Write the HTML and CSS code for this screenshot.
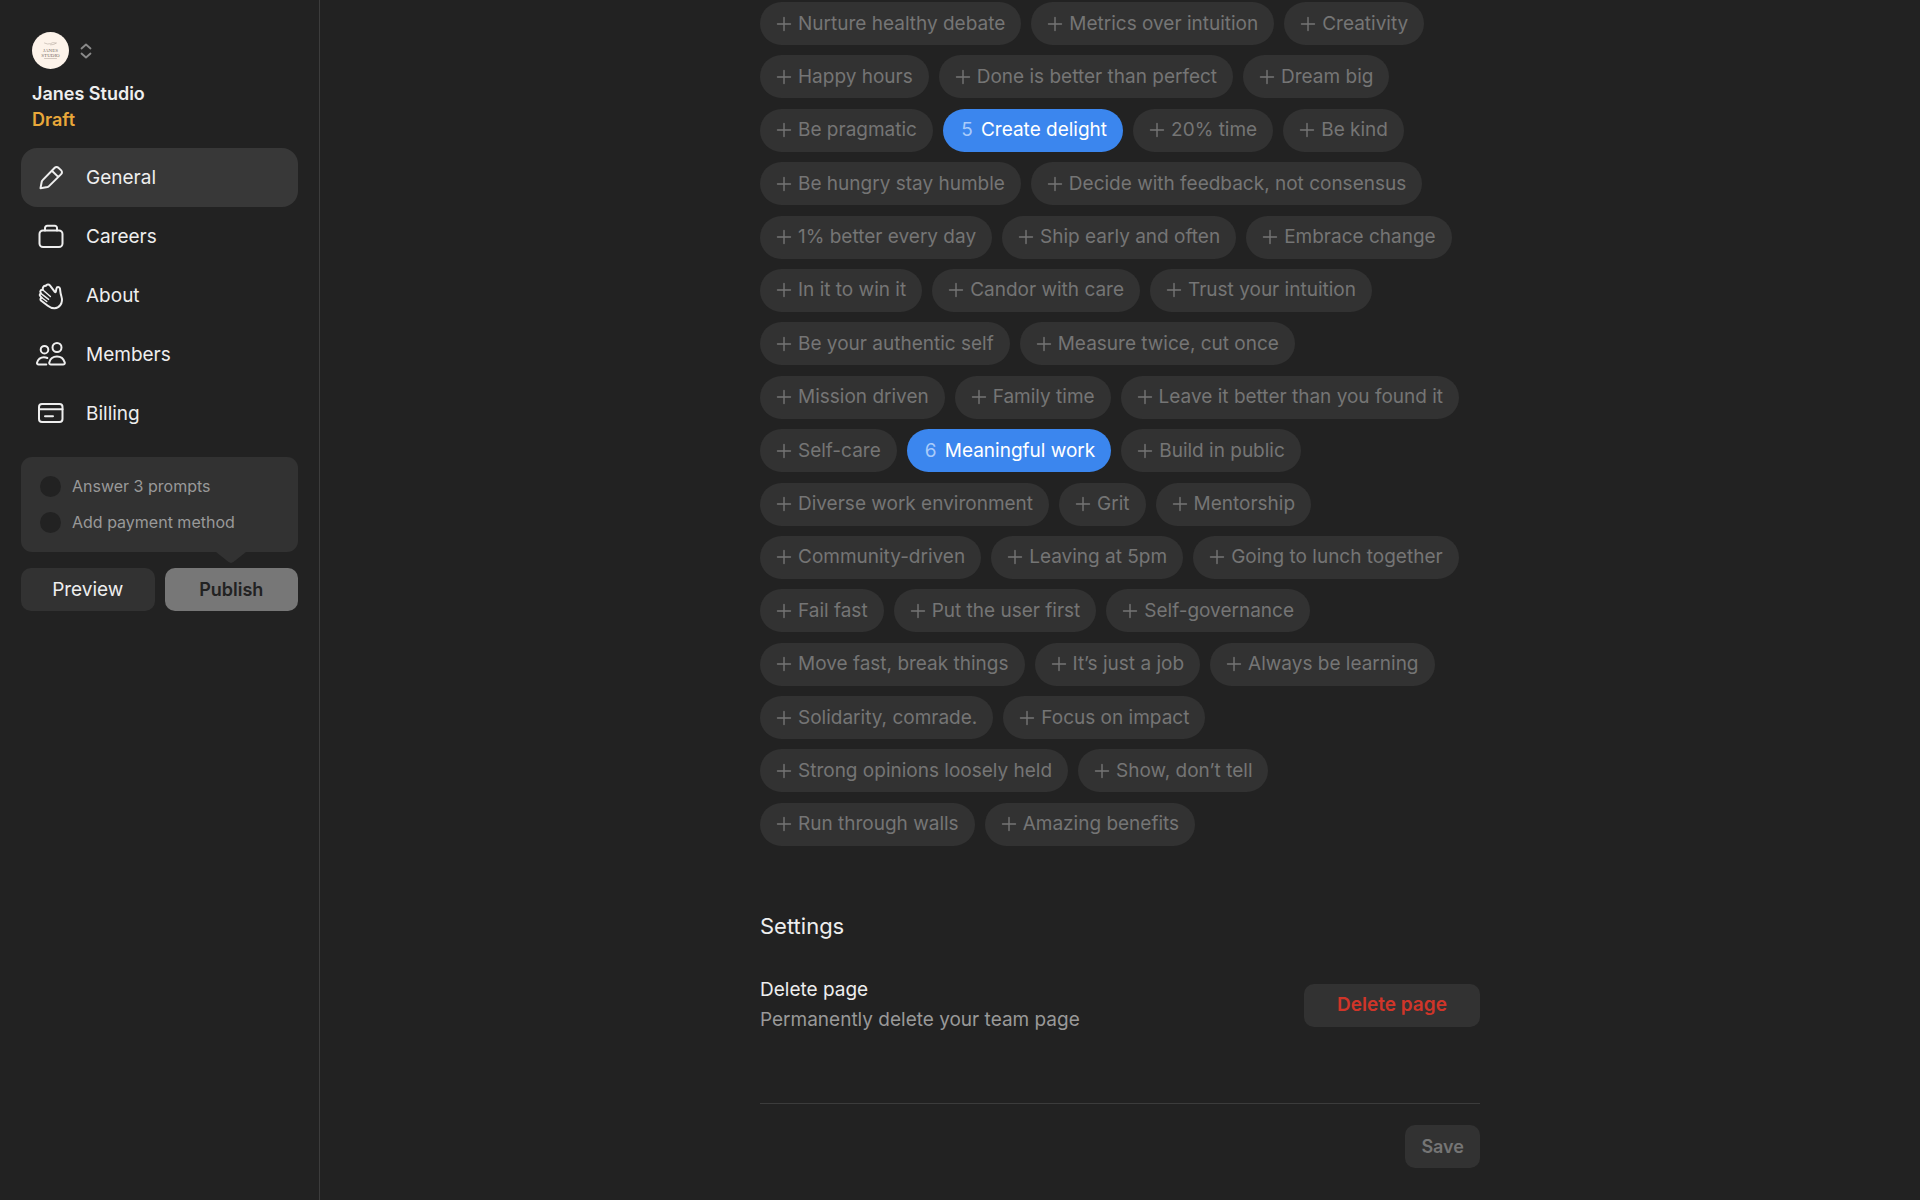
FILE: index.html
```html
<!DOCTYPE html>
<html lang="en">
<head>
<meta charset="utf-8">
<meta name="viewport" content="width=device-width, initial-scale=1">
<title>Janes Studio – General</title>
<link rel="stylesheet" href="styles.css">
</head>
<body>
<svg class="sprite" aria-hidden="true">
  <symbol id="plus" viewBox="0 0 16 16"><path d="M8 1.500v13M1.500 8h13"/></symbol>
</svg>
<div class="app">
  <aside class="sidebar">
    <header class="account">
      <button class="switcher" type="button" aria-label="Switch page">
        <svg class="avatar" viewBox="0 0 37 37" aria-hidden="true">
          <circle class="avatar-bg" cx="18.500" cy="18.500" r="18.500"/>
          <path class="avatar-line" d="M12.500 11l3 1 3-.3 2-1 4 .3-3 1.500-3 .3M12.500 26.500h12"/>
          <text class="avatar-text" x="18.500" y="20">JANES</text>
          <text class="avatar-text" x="18.500" y="24.500">STUDIO</text>
        </svg>
        <svg class="chevrons" viewBox="0 0 12 16" aria-hidden="true"><path d="M1.500 5.500L6 1.500l4.500 4M1.500 10.500l4.500 4 4.500-4"/></svg>
      </button>
      <div class="name">Janes Studio</div>
      <div class="status">Draft</div>
    </header>
    <nav class="nav">
      <a class="nav-item active" href="#general" aria-current="page">
        <svg class="icon" viewBox="0 0 30 30" aria-hidden="true"><path d="M4.500 25.200l1.300-6.800a2 2 0 0 1 .6-1L18.700 4.700a2.600 2.600 0 0 1 3.700 0l2.800 2.700a2.600 2.600 0 0 1 0 3.700L12.500 23.600a2 2 0 0 1-1 .5zM15.900 7.700l6.300 6.200"/></svg>
        General
      </a>
      <a class="nav-item" href="#careers">
        <svg class="icon" viewBox="0 0 30 30" aria-hidden="true"><rect x="3.500" y="8.500" width="23" height="16.500" rx="3.500"/><path d="M9 8.500V6A2.200 2.200 0 0 1 11.200 3.800h7.600a2.200 2.200 0 0 1 2.200 2.200V8.500"/></svg>
        Careers
      </a>
      <a class="nav-item" href="#about">
        <svg class="icon" viewBox="0 0 30 30" aria-hidden="true"><path d="M11.800 24.700L4.900 19.500a1.600 1.600 0 0 1 .9-2.700L4.300 15.100a1.600 1.600 0 0 1 .5-2.700L4.600 11.600c-1-1.700.6-3.500 2.300-2.700C6.200 6.400 7.800 4.600 9.800 4.900c1.100-1.600 3.100-1.700 4.100-.6l4.900 6.600c.4.500.9.400 1-.2l.6-3.100c.4-2.100 3.200-2 3.600.1.300 2.200.3 4.300 1.300 7.300 1.200 3.800 1.300 6-1 9.100-2.900 3.900-8 4.200-12.500.6z"/><path class="fine" d="M5.800 16.800l5 3.700M4.800 12.400l7.800 6M6.900 8.900l7.500 6.700"/></svg>
        About
      </a>
      <a class="nav-item" href="#members">
        <svg class="icon" viewBox="0 0 30 30" aria-hidden="true"><circle cx="21" cy="7.500" r="4.500"/><circle cx="8.500" cy="9.700" r="3.800"/><path d="M15 24.500h12c1.400 0 2.100-.9 1.700-2.100-1.100-3.500-3.700-5.800-7.700-5.800s-6.800 2.300-7.700 5.800c-.3 1.200.4 2.100 1.700 2.100zM10.300 24.500H2.600C1.400 24.500.8 23.700 1.100 22.600c.9-3.200 3.200-5.300 6.800-5.300 1.300 0 2.400.2 3.400.7"/></svg>
        Members
      </a>
      <a class="nav-item" href="#billing">
        <svg class="icon" viewBox="0 0 30 30" aria-hidden="true"><rect x="3" y="5" width="23.500" height="18" rx="3"/><path d="M3 10.300H26.500M9 17.300h8"/></svg>
        Billing
      </a>
    </nav>
    <ul class="todo">
      <li><span class="dot"></span>Answer 3 prompts</li>
      <li><span class="dot"></span>Add payment method</li>
    </ul>
    <div class="actions">
      <button class="btn" type="button">Preview</button>
      <button class="btn publish" type="button">Publish</button>
    </div>
  </aside>
  <main class="content">
    <div class="column">
      <div class="chips">
        <button class="chip" type="button"><svg class="mark"><use href="#plus"/></svg>Nurture healthy debate</button>
        <button class="chip" type="button"><svg class="mark"><use href="#plus"/></svg>Metrics over intuition</button>
        <button class="chip" type="button"><svg class="mark"><use href="#plus"/></svg>Creativity</button>
        <button class="chip" type="button"><svg class="mark"><use href="#plus"/></svg>Happy hours</button>
        <button class="chip" type="button"><svg class="mark"><use href="#plus"/></svg>Done is better than perfect</button>
        <button class="chip" type="button"><svg class="mark"><use href="#plus"/></svg>Dream big</button>
        <button class="chip" type="button"><svg class="mark"><use href="#plus"/></svg>Be pragmatic</button>
        <button class="chip selected" type="button" aria-pressed="true"><span class="mark">5</span>Create delight</button>
        <button class="chip" type="button"><svg class="mark"><use href="#plus"/></svg>20% time</button>
        <button class="chip" type="button"><svg class="mark"><use href="#plus"/></svg>Be kind</button>
        <button class="chip" type="button"><svg class="mark"><use href="#plus"/></svg>Be hungry stay humble</button>
        <button class="chip" type="button"><svg class="mark"><use href="#plus"/></svg>Decide with feedback, not consensus</button>
        <button class="chip" type="button"><svg class="mark"><use href="#plus"/></svg>1% better every day</button>
        <button class="chip" type="button"><svg class="mark"><use href="#plus"/></svg>Ship early and often</button>
        <button class="chip" type="button"><svg class="mark"><use href="#plus"/></svg>Embrace change</button>
        <button class="chip" type="button"><svg class="mark"><use href="#plus"/></svg>In it to win it</button>
        <button class="chip" type="button"><svg class="mark"><use href="#plus"/></svg>Candor with care</button>
        <button class="chip" type="button"><svg class="mark"><use href="#plus"/></svg>Trust your intuition</button>
        <button class="chip" type="button"><svg class="mark"><use href="#plus"/></svg>Be your authentic self</button>
        <button class="chip" type="button"><svg class="mark"><use href="#plus"/></svg>Measure twice, cut once</button>
        <button class="chip" type="button"><svg class="mark"><use href="#plus"/></svg>Mission driven</button>
        <button class="chip" type="button"><svg class="mark"><use href="#plus"/></svg>Family time</button>
        <button class="chip" type="button"><svg class="mark"><use href="#plus"/></svg>Leave it better than you found it</button>
        <button class="chip" type="button"><svg class="mark"><use href="#plus"/></svg>Self-care</button>
        <button class="chip selected" type="button" aria-pressed="true"><span class="mark">6</span>Meaningful work</button>
        <button class="chip" type="button"><svg class="mark"><use href="#plus"/></svg>Build in public</button>
        <button class="chip" type="button"><svg class="mark"><use href="#plus"/></svg>Diverse work environment</button>
        <button class="chip" type="button"><svg class="mark"><use href="#plus"/></svg>Grit</button>
        <button class="chip" type="button"><svg class="mark"><use href="#plus"/></svg>Mentorship</button>
        <button class="chip" type="button"><svg class="mark"><use href="#plus"/></svg>Community-driven</button>
        <button class="chip" type="button"><svg class="mark"><use href="#plus"/></svg>Leaving at 5pm</button>
        <button class="chip" type="button"><svg class="mark"><use href="#plus"/></svg>Going to lunch together</button>
        <button class="chip" type="button"><svg class="mark"><use href="#plus"/></svg>Fail fast</button>
        <button class="chip" type="button"><svg class="mark"><use href="#plus"/></svg>Put the user first</button>
        <button class="chip" type="button"><svg class="mark"><use href="#plus"/></svg>Self-governance</button>
        <button class="chip" type="button"><svg class="mark"><use href="#plus"/></svg>Move fast, break things</button>
        <button class="chip" type="button"><svg class="mark"><use href="#plus"/></svg>It’s just a job</button>
        <button class="chip" type="button"><svg class="mark"><use href="#plus"/></svg>Always be learning</button>
        <button class="chip" type="button"><svg class="mark"><use href="#plus"/></svg>Solidarity, comrade.</button>
        <button class="chip" type="button"><svg class="mark"><use href="#plus"/></svg>Focus on impact</button>
        <button class="chip" type="button"><svg class="mark"><use href="#plus"/></svg>Strong opinions loosely held</button>
        <button class="chip" type="button"><svg class="mark"><use href="#plus"/></svg>Show, don’t tell</button>
        <button class="chip" type="button"><svg class="mark"><use href="#plus"/></svg>Run through walls</button>
        <button class="chip" type="button"><svg class="mark"><use href="#plus"/></svg>Amazing benefits</button>
      </div>
      <section class="settings">
        <h2>Settings</h2>
        <div class="setting">
          <div>
            <h3>Delete page</h3>
            <p>Permanently delete your team page</p>
          </div>
          <button class="btn danger" type="button">Delete page</button>
        </div>
      </section>
      <footer class="footer">
        <button class="btn save" type="button">Save</button>
      </footer>
    </div>
  </main>
</div>
</body>
</html>
```
FILE: styles.css
```css
:root {
  --bg: #222;
  --surface: #323232;
  --line: #3c3c3c;
  --text: #eee;
  --muted: #999;
  --dim: #757575;
}

* { box-sizing: border-box; }

body, h2, h3, p, ul { margin: 0; padding: 0; }

body {
  background: var(--bg);
  color: var(--text);
  font: 400 19px/26px Inter, "Liberation Sans", sans-serif;
}

button {
  border: 0;
  padding: 0;
  background: none;
  color: inherit;
  font: inherit;
  cursor: pointer;
}

svg {
  fill: none;
  stroke: currentColor;
  stroke-linecap: round;
  stroke-linejoin: round;
}

.sprite { display: none; }

.app {
  display: flex;
  min-height: 100vh;
}

/* Sidebar */
.sidebar {
  flex: none;
  width: 320px;
  padding: 32px 21px;
  border-right: 1px solid var(--line);
}

.account { padding: 0 11px; }

.switcher {
  display: flex;
  align-items: center;
  gap: 11px;
  margin-bottom: 12px;
}

.avatar { width: 37px; height: 37px; }
.avatar-bg { fill: #fdf3ea; stroke: none; }
.avatar-line { stroke: #b5aaa0; stroke-width: 0.6; }
.avatar-text {
  fill: #756c65;
  stroke: none;
  font: 5px "Liberation Serif", serif;
  text-anchor: middle;
}

.chevrons {
  width: 12px;
  height: 16px;
  color: #8a8a8a;
  stroke-width: 1.8;
}

.name, .status {
  font-size: 18px;
  font-weight: 600;
}

.status { color: #e9a83a; }

.nav { margin-top: 15px; }

.nav-item {
  display: flex;
  align-items: center;
  gap: 20px;
  padding: 14px 15px;
  border-radius: 16px;
  color: inherit;
  line-height: 31px;
  text-decoration: none;
}

.nav-item.active { background: #383838; }

.icon {
  width: 30px;
  height: 30px;
  stroke-width: 2;
}

.icon .fine { stroke-width: 1.4; }

.todo {
  position: relative;
  display: grid;
  gap: 10px;
  margin-top: 14px;
  padding: 16px 19px 17px;
  border-radius: 11px;
  background: var(--surface);
  color: var(--muted);
  font-size: 16px;
  list-style: none;
}

.todo::after {
  content: "";
  position: absolute;
  top: 100%;
  right: 52px;
  width: 30px;
  height: 11px;
  background: var(--surface);
  clip-path: polygon(0 0, 100% 0, 58% 90%, 50% 100%, 42% 90%);
}

.todo li {
  display: flex;
  align-items: center;
  gap: 11px;
}

.dot {
  width: 21px;
  height: 21px;
  border-radius: 50%;
  background: var(--bg);
}

.actions {
  display: grid;
  grid-template-columns: 1fr 1fr;
  gap: 10px;
  margin-top: 16px;
}

.btn {
  height: 43px;
  padding: 0 16px;
  border-radius: 10px;
  background: var(--surface);
}

.publish {
  background: #777;
  color: var(--bg);
  font-size: 18px;
  font-weight: 600;
}

/* Main column */
.content {
  flex: 1;
  display: flex;
  justify-content: center;
}

.column {
  display: flex;
  flex-direction: column;
  width: 100%;
  max-width: 720px;
  padding: 2px 0 32px;
}

.chips {
  flex: 1;
  display: flex;
  flex-wrap: wrap;
  align-content: space-between;
  gap: 10px;
}

.chip {
  display: flex;
  align-items: center;
  gap: 6px;
  height: 43px;
  padding: 0 16px;
  border-radius: 22px;
  background: var(--surface);
  color: var(--dim);
}

.mark {
  width: 16px;
  height: 16px;
  stroke-width: 1.4;
}

.selected {
  background: #3b86ee;
  color: #fff;
}

.selected .mark {
  color: #a9cbfa;
  line-height: 16px;
}

.settings { padding: 63px 0 68px; }

.settings h2 {
  margin-bottom: 32px;
  font-size: 22px;
  font-weight: 400;
  line-height: 34px;
}

.setting {
  display: flex;
  align-items: center;
  justify-content: space-between;
}

.setting h3 {
  font-size: 19px;
  font-weight: 400;
  line-height: 30px;
}

.setting p {
  color: var(--muted);
  line-height: 30px;
}

.danger {
  min-width: 176px;
  color: #cf3529;
  font-weight: 600;
}

.footer {
  display: flex;
  justify-content: flex-end;
  padding-top: 21px;
  border-top: 1px solid var(--line);
}

.save {
  color: var(--dim);
  font-size: 18px;
  font-weight: 600;
}
```
